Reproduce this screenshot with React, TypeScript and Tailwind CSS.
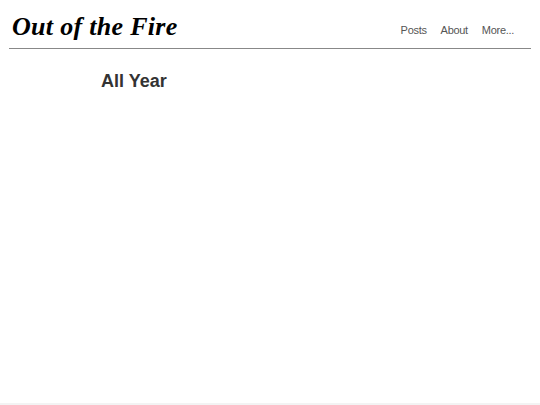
import React from "react";

export default function App() {
  return (
    <div className="w-[540px] h-[405px] bg-white flex flex-col overflow-hidden">
      <header className="mx-[9px] h-[49px] border-b border-[#888] flex items-end justify-between pb-[8px]">
        <h1 className="ml-[3px] text-[26px] leading-none font-bold italic text-black tracking-[0.3px]" style={{ fontFamily: '"Liberation Serif", "Times New Roman", serif' }}>
          Out of the Fire
        </h1>
        <nav className="flex gap-[14px] mr-[17px] mb-[4px] text-[11px] leading-none text-[#555] tracking-[-0.3px]" style={{ fontFamily: '"Liberation Sans", Arial, sans-serif' }}>
          <a>Posts</a>
          <a>About</a>
          <a>More...</a>
        </nav>
      </header>
      <main className="flex-1 pl-[101px] pt-[23px]">
        <h2 className="text-[18px] leading-none font-bold text-[#333]" style={{ fontFamily: '"Liberation Sans", Arial, sans-serif' }}>
          All Year
        </h2>
      </main>
      <footer className="h-[2px] bg-[#f3f3f3]" />
    </div>
  );
}
